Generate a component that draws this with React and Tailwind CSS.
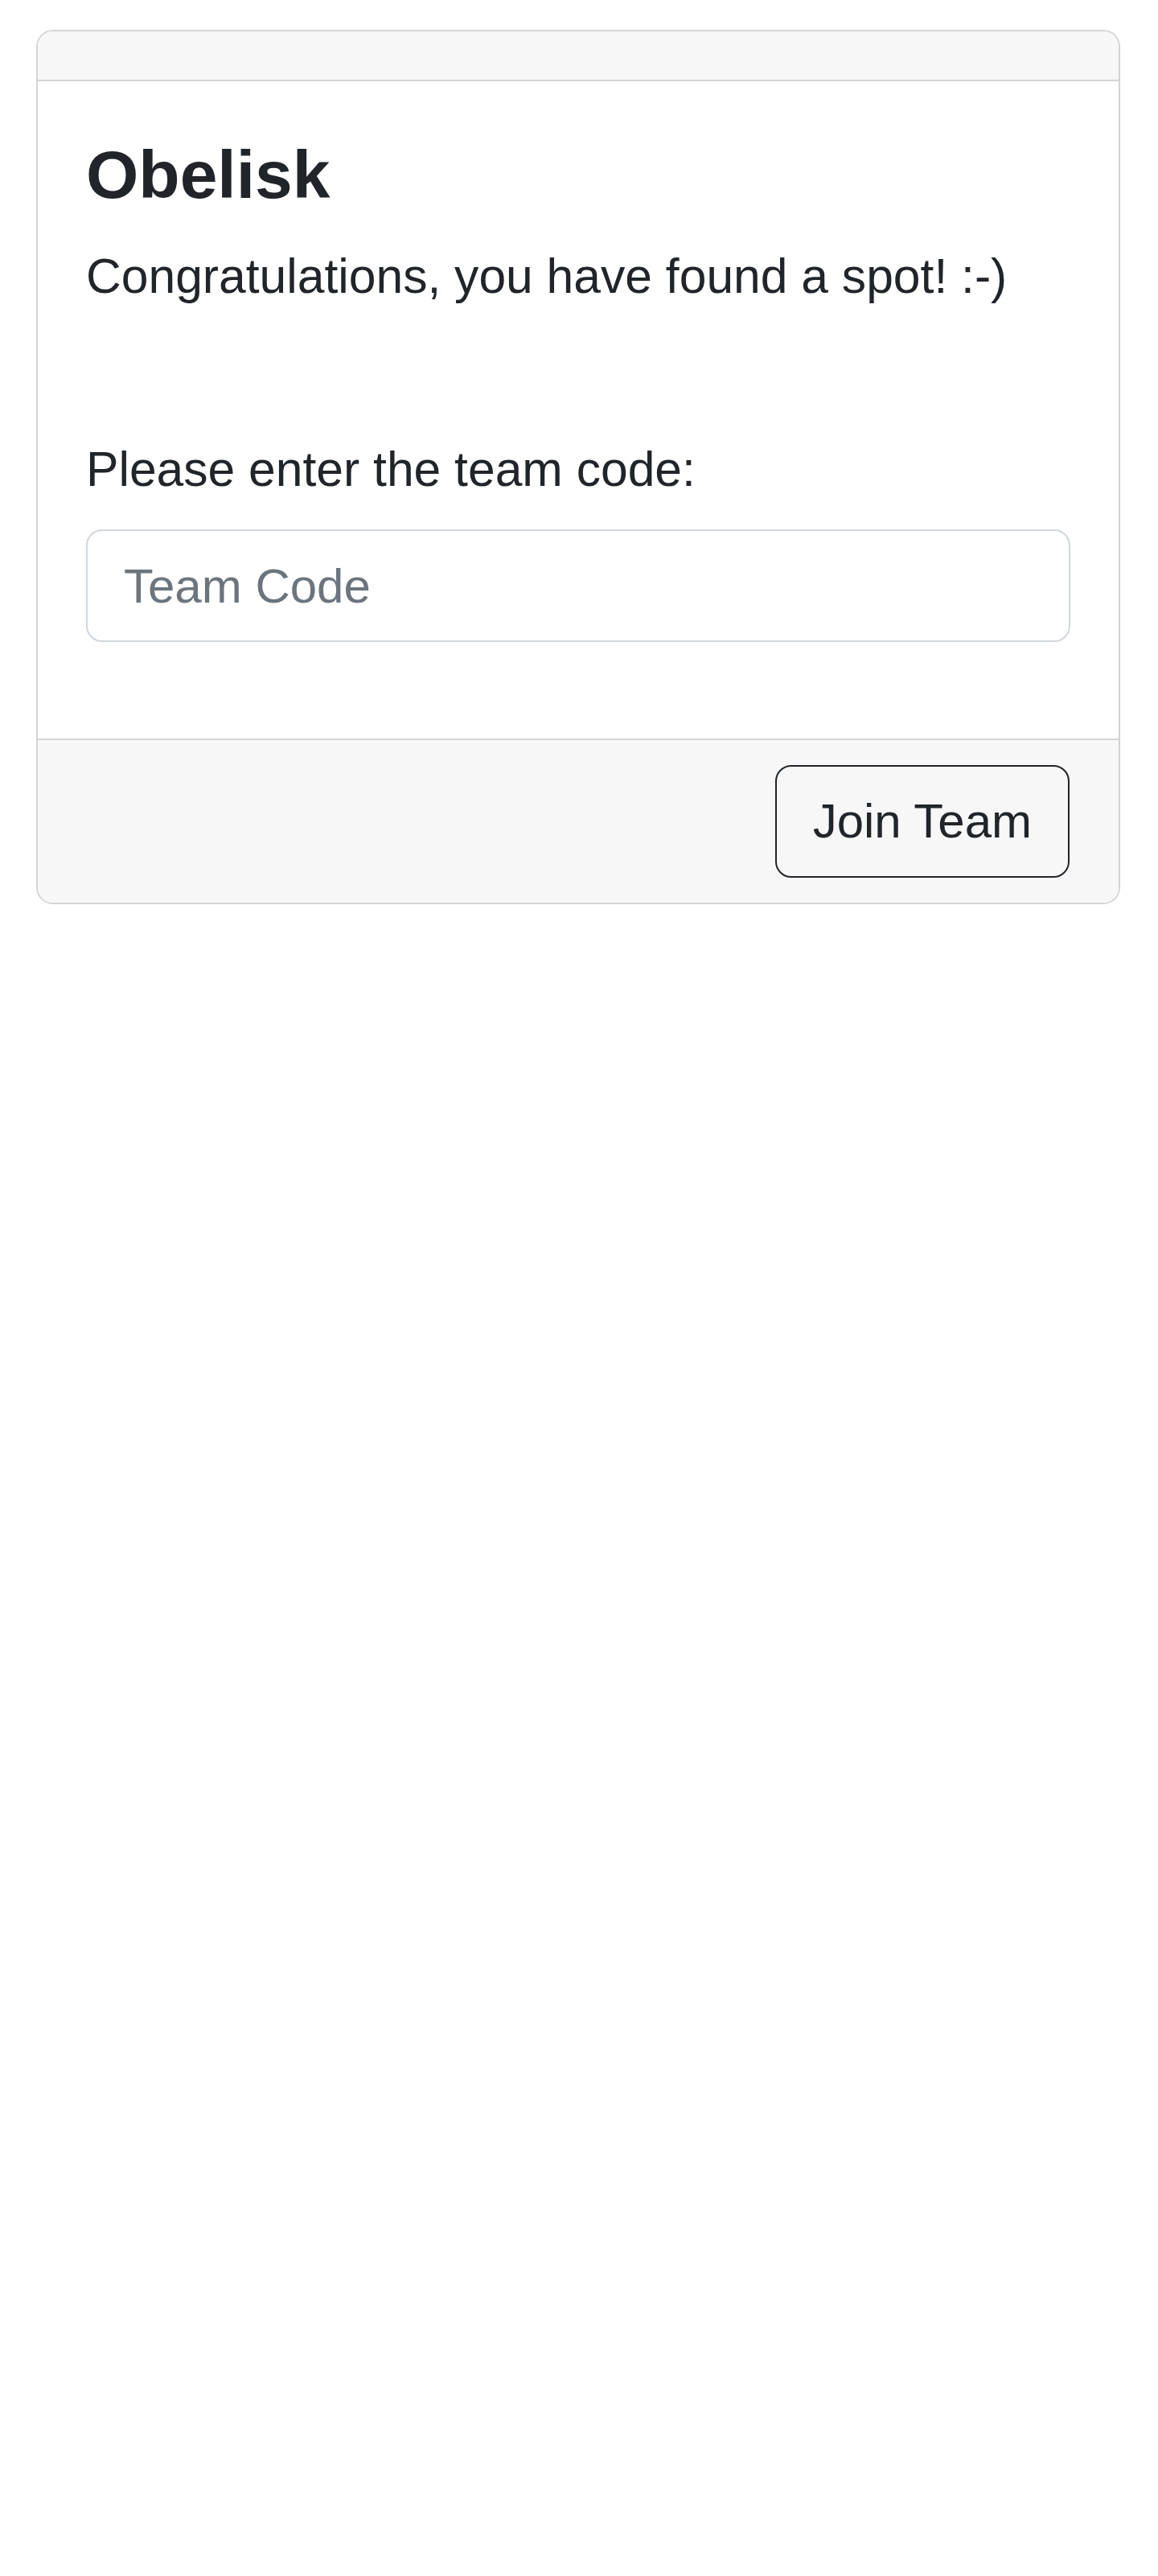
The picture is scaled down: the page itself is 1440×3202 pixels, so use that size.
export default function App() {
  return (
    <div
      className="min-h-[3202px] bg-white pl-[45px] pr-[47px] pt-[37px] text-[#212529]"
      style={{ fontFamily: '"Liberation Sans", Arial, sans-serif' }}
    >
      <div className="rounded-[21px] border-2 border-[#d4d4d4] bg-white">
        <div className="h-[62px] rounded-t-[19px] border-b-2 border-[#d4d4d4] bg-[#f7f7f7]"></div>

        <div className="px-[60px] pt-[60px] pb-[60px]">
          <h3 className="mb-[25px] text-[84px] font-bold leading-[112px]">Obelisk</h3>
          <p className="mb-[60px] text-[60.6px] leading-[90px]">
            Congratulations, you have found a spot! :-)
          </p>
          <div className="h-[90px]"></div>
          <label className="mb-[30px] block text-[60.6px] leading-[90px]">
            Please enter the team code:
          </label>
          <input
            type="text"
            placeholder="Team Code"
            className="mb-[60px] block h-[140px] w-full rounded-[20px] border-2 border-[#d1d6dc] bg-white px-[45px] text-[60px] leading-[90px] text-[#212529] placeholder:text-[#6c757d] outline-none"
          />
        </div>

        <div className="flex justify-end rounded-b-[19px] border-t-2 border-[#d4d4d4] bg-[#f7f7f7] pl-[60px] pr-[61px] py-[31px]">
          <button className="h-[140px] rounded-[20px] border-2 border-[#212529] bg-transparent px-[45px] text-[60px] leading-[90px] text-[#212529]">
            Join Team
          </button>
        </div>
      </div>
    </div>
  )
}
